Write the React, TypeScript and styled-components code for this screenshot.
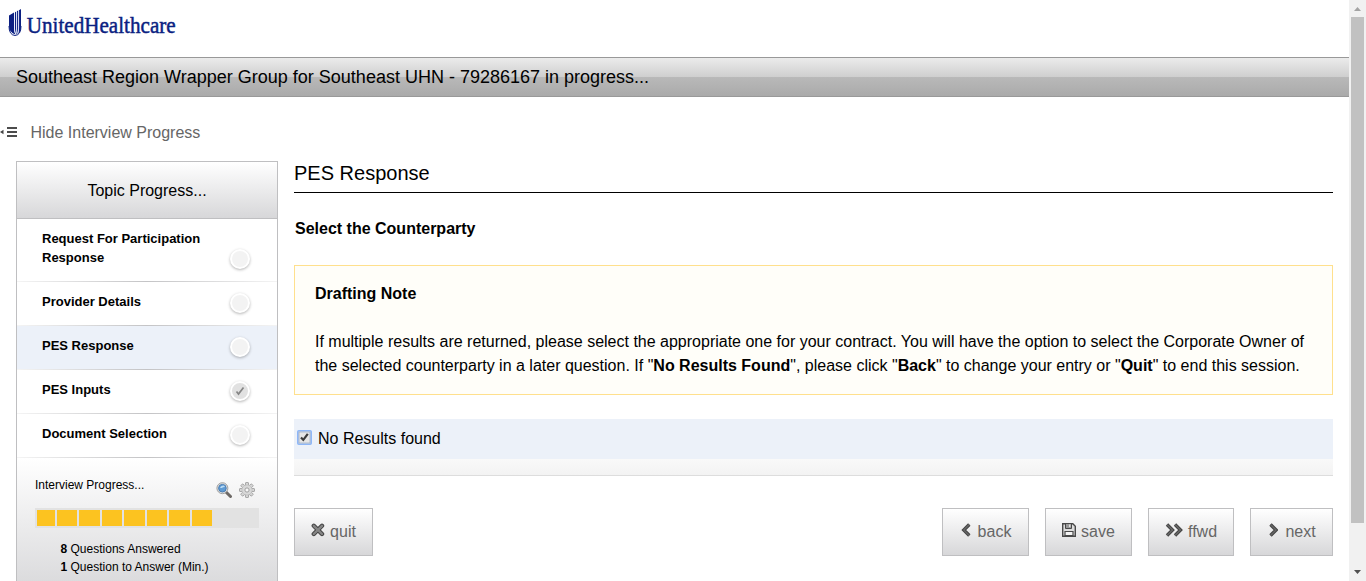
import React from 'react';
import styled, { createGlobalStyle } from 'styled-components';

const GlobalStyle = createGlobalStyle`
  * { box-sizing: border-box; }
  body { margin: 0; background: #fff; overflow: hidden; }
`;

const Screen = styled.div`
  display: flex;
  width: 1366px;
  height: 581px;
  overflow: hidden;
  color: #000;
  font-family: "Liberation Sans", Arial, sans-serif;
`;
const Page = styled.div`
  width: 1349px;
  height: 581px;
  flex: none;
  overflow: hidden;
`;
const Brand = styled.header`
  height: 57px;
  svg { display: block; }
`;
const TitleBar = styled.h1`
  margin: 0;
  height: 40px;
  padding-left: 16px;
  border: solid #999;
  border-width: 1px 0;
  background: linear-gradient(#ebebeb 0, #cfcfcf 50%, #b9b9b9 50%, #aaa 100%);
  font-size: 18px;
  font-weight: 400;
  line-height: 38px;
  white-space: nowrap;
`;
const HideToggle = styled.div`
  display: flex;
  align-items: center;
  gap: 13.5px;
  height: 64px;
  padding-top: 7px;
  color: #666;
  font-size: 16px;
  line-height: 19px;
  svg { margin-bottom: 2px; }
`;
const Columns = styled.div`
  display: flex;
  gap: 16px;
  padding: 0 16px;
`;
const Sidebar = styled.aside`
  width: 262px;
  height: 460px;
  flex: none;
  border: 1px solid #bfbfc1;
`;
const SideHeading = styled.div`
  height: 57px;
  border-bottom: 1px solid #bfbfc1;
  background: linear-gradient(#fff, #d7d7d9);
  font-size: 16px;
  line-height: 57px;
  text-align: center;
`;
const Topic = styled.div<{ $tall?: boolean; $active?: boolean }>`
  display: flex;
  justify-content: space-between;
  align-items: ${p => (p.$tall ? 'flex-end' : 'flex-start')};
  height: ${p => (p.$tall ? 63 : 44)}px;
  padding: ${p => (p.$tall ? '0 27px 13px 25px' : '10px 27px 0 25px')};
  background: linear-gradient(90deg, #f4f4f4, #c4c4c6 50%, #f4f4f4) bottom / 100% 1px no-repeat,
    ${p => (p.$active ? '#ecf1f9' : '#fff')};
  font-size: 13px;
  font-weight: 700;
  line-height: 19px;
`;
const TopicName = styled.span<{ $tall?: boolean }>`
  width: 175px;
  height: ${p => (p.$tall ? 40 : 24)}px;
`;
const Status = styled.span<{ $done?: boolean }>`
  display: flex;
  align-items: center;
  justify-content: center;
  width: 20px;
  height: 20px;
  margin-top: 1px;
  border: 2px solid #fff;
  border-radius: 50%;
  background: ${p => (p.$done ? '#e1e1e1' : '#f3f3f3')};
  box-shadow: 0 1px 3px rgba(0, 0, 0, 0.3);
`;
const Progress = styled.section`
  height: 190px;
  padding: 17px 18px;
  background: linear-gradient(#fff, #d8d8da 135px);
  font-size: 12px;
`;
const ProgressHead = styled.div`
  display: flex;
  justify-content: space-between;
  height: 33px;
  line-height: 20px;
`;
const Tools = styled.div`
  display: flex;
  gap: 7px;
  padding: 7px 4px 0 0;
`;
const Meter = styled.div`
  display: flex;
  gap: 2px;
  width: 224px;
  height: 20px;
  padding: 2px;
  background: #e2e2e2;
`;
const Segment = styled.i`
  width: 20.43px;
  height: 16px;
  background: #fcc320;
  &:first-child { width: 18px; }
`;
const Counts = styled.div`
  padding: 12px 0 0 25.5px;
  line-height: 18px;
`;
const Main = styled.main`
  width: 1039px;
`;
const Heading = styled.h2`
  margin: 0;
  height: 32px;
  border-bottom: 1px solid #000;
  font-size: 20px;
  font-weight: 400;
  line-height: 24px;
`;
const Question = styled.h3`
  margin: 0;
  height: 72px;
  padding: 24px 0 0 1px;
  font-size: 16px;
  line-height: 24px;
`;
const Note = styled.section`
  height: 130px;
  padding: 16px 20px;
  border: 1px solid #ffe08d;
  background: #fffef9;
  font-size: 16px;
  line-height: 24px;
  white-space: nowrap;
  p { margin: 24px 0 0; }
`;
const Answer = styled.label`
  display: flex;
  align-items: center;
  gap: 6px;
  height: 40px;
  margin-top: 24px;
  padding: 0 3px;
  background: #ecf1f9;
  font-size: 16px;
  svg { margin-bottom: 3px; }
`;
const AnswerFoot = styled.div`
  height: 17px;
  border-bottom: 1px solid #ddd;
  background: linear-gradient(#f9f9f9, #f3f3f3);
`;
const Actions = styled.div`
  display: flex;
  gap: 16px;
  margin-top: 32px;
`;
const Button = styled.button<{ $width: number; $first?: boolean; $gap?: number }>`
  display: flex;
  align-items: center;
  justify-content: center;
  gap: ${p => p.$gap ?? 5}px;
  width: ${p => p.$width}px;
  height: 48px;
  margin: ${p => (p.$first ? '0 auto 0 0' : '0')};
  padding: 0 0 1px;
  border: 1px solid #bfbfc1;
  background: linear-gradient(#fff, #d7d7d9);
  color: #666;
  font: 16px "Liberation Sans", Arial, sans-serif;
  svg { margin-bottom: 3px; }
`;
const Scrollbar = styled.div`
  display: flex;
  flex-direction: column;
  align-items: center;
  justify-content: space-between;
  width: 17px;
  height: 581px;
  background: #f1f1f1;
  svg { display: block; }
`;
const Thumb = styled.div`
  width: 13px;
  height: 506px;
  margin-bottom: 41px;
  background: #c1c1c1;
`;

const Logo = () => (
  <svg width="260" height="56" viewBox="0 0 260 56">
    <g fill="#0b1f82">
      <path d="M9 15.5 14 12.5V29q0 3 1.5 5.5Q9 32.5 9 26Z" />
      <path d="M15 12.2 16.2 11.5V29q0 4 1.3 6-2.5-1.5-2.5-6Z" />
      <path d="M17 11.1 18.3 10.5V28q0 4-1 6.5-.5-2-.3-6Z" />
      <path d="M19 10.2 21 9V26q0 5.5-3 8.5 1-3 1-7Z" />
    </g>
    <path d="M9 26q0 9 6 9.5 6-.5 6-9.5" fill="none" stroke="#0b1f82" strokeWidth="1" />
    <path d="M14.5 13v16q0 3.5 1.5 5M16.6 12v17l.4 4M18.6 11v17q0 3-1 5.5" fill="none" stroke="#dfe6fa" strokeWidth=".7" />
    <text x="26.7" y="33" fontFamily="Liberation Serif, Times New Roman, serif" fontSize="24" textLength="149" lengthAdjust="spacingAndGlyphs" fill="#0b1f82" stroke="#0b1f82" strokeWidth=".5">UnitedHealthcare</text>
  </svg>
);

const HideIcon = () => (
  <svg width="17" height="12" viewBox="0 0 17 12">
    <path d="M0 6 3.5 3.8V8.2Z" fill="#444" />
    <path d="M7 2h10M7 6h10M7 10h10" stroke="#4c4c4c" strokeWidth="1.8" />
  </svg>
);

const CheckMark = () => (
  <svg width="10" height="10" viewBox="0 0 10 10">
    <path d="m1.5 5.5 2 2.5L8.5 1.5" fill="none" stroke="#858585" strokeWidth="1.7" />
  </svg>
);

const Magnifier = () => (
  <svg width="16" height="16" viewBox="0 0 16 16">
    <path d="m10 10 4.5 4.5" stroke="#6d6966" strokeWidth="3" strokeLinecap="round" />
    <circle cx="6.4" cy="6.2" r="5.5" fill="#ddd" stroke="#999" strokeWidth=".9" />
    <circle cx="6.4" cy="6.2" r="3.8" fill="#5f9bd4" stroke="#4a7db3" />
    <path d="M4 6q.5-2.5 3.4-2.5 1.5.3 1.4 1.5Q7 5.2 5.8 6Z" fill="#bbdcf5" />
  </svg>
);

const Gear = () => (
  <svg width="16" height="16" viewBox="-8 -8 16 16">
    {Array.from({ length: 8 }, (_, i) => (
      <rect key={i} x="-1.5" y="-7.5" width="3" height="3.5" rx=".5" transform={`rotate(${i * 45})`} fill="#d5d5d5" stroke="#999" strokeWidth=".8" />
    ))}
    <circle r="5.1" fill="#d8d8d8" stroke="#b5b5b5" strokeWidth=".5" />
    <circle r="2.1" fill="#f7f7f7" stroke="#999" strokeWidth=".9" />
  </svg>
);

const Checkbox = () => (
  <svg width="15" height="15" viewBox="0 0 15 15">
    <rect x=".8" y=".8" width="13.4" height="13.4" rx="1" fill="#e6e6e6" stroke="#8eb7f8" strokeWidth="1.6" />
    <rect x="2" y="2" width="11" height="11" fill="none" stroke="#98a8c3" strokeWidth=".7" />
    <path d="m4 7.5 2.3 2.4 4.5-6" fill="none" stroke="#3b3b3b" strokeWidth="2.2" />
  </svg>
);

const QuitIcon = () => (
  <svg width="14" height="14" viewBox="0 0 14 14" fill="none" strokeLinecap="round">
    <path d="m2.8 2.8 8.2 8.2m0-8.2-8.2 8.2" stroke="#444" strokeWidth="4.4" />
    <path d="m2.8 2.8 8.2 8.2m0-8.2-8.2 8.2" stroke="#858585" strokeWidth="2.4" />
  </svg>
);

const Chevron = ({ path, width }: { path: string; width: number }) => (
  <svg width={width} height="14" viewBox={`0 0 ${width} 14`} fill="none">
    <path d={path} stroke="#444" strokeWidth="3.4" />
    <path d={path} stroke="#686868" strokeWidth="1.3" />
  </svg>
);

const SaveIcon = () => (
  <svg width="14" height="14" viewBox="0 0 14 14" fill="none" stroke="#494949">
    <path d="M.7.7h10.1l2.5 2.5v10.1H.7Z" fill="#ddd" strokeWidth="1.4" />
    <path d="M3.5 1v4.5h6V1" fill="#999" />
    <path d="M7.8 1.5v2.6" stroke="#fff" />
    <path d="M3 12.5v-4h8v4Z" fill="#f4f4f4" strokeWidth="1.2" />
  </svg>
);

const topics = [
  { name: 'Request For Participation Response', tall: true },
  { name: 'Provider Details' },
  { name: 'PES Response', active: true },
  { name: 'PES Inputs', done: true },
  { name: 'Document Selection' },
];

export default function App() {
  return (
    <Screen>
      <GlobalStyle />
      <Page>
        <Brand><Logo /></Brand>
        <TitleBar>Southeast Region Wrapper Group for Southeast UHN - 79286167 in progress...</TitleBar>
        <HideToggle><HideIcon />Hide Interview Progress</HideToggle>
        <Columns>
          <Sidebar>
            <SideHeading>Topic Progress...</SideHeading>
            {topics.map(t => (
              <Topic key={t.name} $tall={t.tall} $active={t.active}>
                <TopicName $tall={t.tall}>{t.name}</TopicName>
                <Status $done={t.done}>{t.done && <CheckMark />}</Status>
              </Topic>
            ))}
            <Progress>
              <ProgressHead>
                Interview Progress...
                <Tools><Magnifier /><Gear /></Tools>
              </ProgressHead>
              <Meter>{Array.from({ length: 8 }, (_, i) => <Segment key={i} />)}</Meter>
              <Counts>
                <div><b>8</b> Questions Answered</div>
                <div><b>1</b> Question to Answer (Min.)</div>
              </Counts>
            </Progress>
          </Sidebar>
          <Main>
            <Heading>PES Response</Heading>
            <Question>Select the Counterparty</Question>
            <Note>
              <b>Drafting Note</b>
              <p>
                If multiple results are returned, please select the appropriate one for your contract. You will have the option to select the Corporate Owner of<br />
                the selected counterparty in a later question. If "<b>No Results Found</b>", please click "<b>Back</b>" to change your entry or "<b>Quit</b>" to end this session.
              </p>
            </Note>
            <Answer><Checkbox />No Results found</Answer>
            <AnswerFoot />
            <Actions>
              <Button $width={79} $first><QuitIcon />quit</Button>
              <Button $width={87} $gap={7}><Chevron width={11} path="M9.3 1.5 3.8 7 9.3 12.5" />back</Button>
              <Button $width={87}><SaveIcon />save</Button>
              <Button $width={86}><Chevron width={18} path="M2 1.5 7.5 7 2 12.5M10 1.5 15.5 7 10 12.5" />ffwd</Button>
              <Button $width={83} $gap={7}><Chevron width={11} path="M3.5 1.5 9 7 3.5 12.5" />next</Button>
            </Actions>
          </Main>
        </Columns>
      </Page>
      <Scrollbar>
        <svg width="17" height="17"><path d="M5 11 8.5 7 12 11Z" fill="#a3a3a3" /></svg>
        <Thumb />
        <svg width="17" height="17"><path d="M5 6 8.5 10 12 6Z" fill="#505050" /></svg>
      </Scrollbar>
    </Screen>
  );
}
